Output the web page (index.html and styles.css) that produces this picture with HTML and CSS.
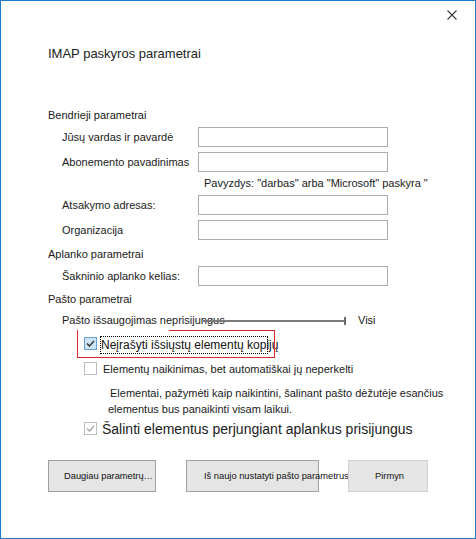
FILE: index.html
```html
<!DOCTYPE html>
<html lang="lt">
<head>
<meta charset="utf-8">
<title>IMAP paskyros parametrai</title>
<link rel="stylesheet" href="styles.css">
</head>
<body>
<div class="dialog">
  <div class="titlebar">
    <svg class="close" width="10" height="10" viewBox="0 0 10 10"><path d="M0.5 0.5L9.5 9.5M9.5 0.5L0.5 9.5" stroke="#3a3a3a" stroke-width="1.1" fill="none"/></svg>
  </div>
  <div class="content">
    <h1 class="title">IMAP paskyros parametrai</h1>

    <div class="heading first">Bendrieji parametrai</div>
    <div class="rows">
      <div class="row"><label class="lbl">Jūsų vardas ir pavardė</label><span class="input"></span></div>
      <div class="row"><label class="lbl">Abonemento pavadinimas</label><span class="input"></span></div>
      <div class="hint">Pavyzdys: "darbas" arba "Microsoft" paskyra "</div>
      <div class="row"><label class="lbl">Atsakymo adresas:</label><span class="input"></span></div>
      <div class="row"><label class="lbl">Organizacija</label><span class="input"></span></div>
    </div>

    <div class="heading next">Aplanko parametrai</div>
    <div class="rows">
      <div class="row"><label class="lbl">Šakninio aplanko kelias:</label><span class="input"></span></div>
    </div>

    <div class="heading next2">Pašto parametrai</div>
    <div class="slider-row">
      <span class="slider-label">Pašto išsaugojimas neprisijungus</span>
      <span class="slider"><span class="track"></span><span class="tick"></span></span>
      <span class="slider-value">Visi</span>
    </div>

    <div class="options">
      <div class="opt opt-focus">
        <span class="cb cb-hot"><svg width="11" height="11" viewBox="0 0 11 11"><path d="M2 5.6L4.4 8L9 3" fill="none" stroke="#2e2e2e" stroke-width="1.4"/></svg></span>
        <span class="focus">Neįrašyti išsiųstų elementų kopijų</span>
      </div>
      <div class="opt opt-small">
        <span class="cb"></span>
        <span class="opt-text">Elementų naikinimas, bet automatiškai jų neperkelti</span>
      </div>
      <p class="desc">Elementai, pažymėti kaip naikintini, šalinant pašto dėžutėje esančius elementus bus panaikinti visam laikui.</p>
      <div class="opt opt-large">
        <span class="cb cb-disabled"><svg width="11" height="11" viewBox="0 0 11 11"><path d="M2 5.6L4.4 8L9 3" fill="none" stroke="#a3a3a3" stroke-width="1.3"/></svg></span>
        <span class="opt-text-large">Šalinti elementus perjungiant aplankus prisijungus</span>
      </div>
    </div>

    <div class="buttons">
      <button class="btn btn-more">Daugiau parametrų…</button>
      <button class="btn btn-reset">Iš naujo nustatyti pašto parametrus</button>
      <button class="btn btn-next">Pirmyn</button>
    </div>
  </div>
  <div class="highlight"></div>
</div>
</body>
</html>
```

FILE: styles.css
```css
* { box-sizing: border-box; }
html, body { margin: 0; padding: 0; background: #fff; }
body { font-family: "Liberation Sans", Arial, sans-serif; color: #1a1a1a; }

.dialog {
  position: relative;
  width: 476px;
  height: 539px;
  border: 1px solid #1979ca;
  background: #fff;
}

.titlebar {
  display: flex;
  justify-content: flex-end;
  align-items: flex-start;
  height: 30px;
  padding: 9px 18px 0 0;
}
.close { display: block; }

.content { padding-left: 47px; }

.title {
  margin: 15px 0 0;
  font-size: 13px;
  line-height: 15px;
  font-weight: normal;
  color: #222;
}

.heading { font-size: 11px; line-height: 13px; }
.heading.first { margin-top: 48px; }
.heading.next { margin-top: 8px; }
.heading.next2 { margin-top: 7px; }

.rows {
  display: flex;
  flex-direction: column;
  gap: 5px;
  margin-top: 5px;
  padding-left: 14px;
}
.row { display: flex; align-items: center; height: 20px; }
.lbl { width: 136px; font-size: 11px; line-height: 13px; white-space: nowrap; }
.input {
  width: 190px;
  height: 20px;
  border: 1px solid #acacac;
  background: #fff;
}
.hint { padding-left: 142px; font-size: 11px; line-height: 13px; white-space: nowrap; }

.slider-row {
  display: flex;
  align-items: center;
  height: 13px;
  margin-top: 8px;
  padding-left: 14px;
}
.slider-label { width: 141px; font-size: 11px; line-height: 13px; white-space: nowrap; }
.slider { position: relative; display: flex; align-items: center; width: 144px; height: 8px; }
.track { display: block; flex: 1; height: 2px; background: #7a7a7a; }
.tick { display: block; width: 2px; height: 8px; background: #6a6a6a; margin-right: 1px; }
.slider-value { margin-left: 11px; font-size: 11px; line-height: 13px; }

.options { padding-left: 36px; }
.opt { display: flex; align-items: flex-start; }
.opt-focus { margin-top: 9px; height: 18px; }
.opt-small { margin-top: 8px; }
.opt-large { margin-top: 4px; }

.cb {
  display: flex;
  align-items: center;
  justify-content: center;
  width: 13px;
  height: 13px;
  border: 1px solid #bdbdbd;
  background: #fff;
  flex: none;
}
.cb svg { display: block; }
.opt-focus .cb { margin-top: 1px; }
.cb-hot { border-color: #6d9fd3; background: #cce4f7; }
.opt-large .cb { margin-top: 1px; }

.focus {
  margin-left: 3px;
  width: 168px;
  height: 18px;
  border: 1px dotted #000;
  font-size: 12px;
  line-height: 16px;
  white-space: nowrap;
  color: #111;
}

.opt-text { margin-left: 6px; margin-top: 1px; font-size: 11px; line-height: 13px; white-space: nowrap; }
.desc {
  margin: 9px 0 0;
  padding-left: 24px;
  width: 372px;
  text-indent: 2px;
  font-size: 11px;
  line-height: 16px;
}
.opt-text-large { margin-left: 5px; font-size: 14px; line-height: 16px; white-space: nowrap; color: #1a1a1a; }

.buttons { display: flex; margin-top: 23px; }
.btn {
  height: 32px;
  border: 1px solid #a0a0a0;
  background: #e5e5e5;
  font-family: "Liberation Sans", Arial, sans-serif;
  font-size: 9.3px;
  color: #111;
  white-space: nowrap;
  overflow: visible;
  padding: 0;
  text-align: left;
}
.btn-more { width: 108px; padding-left: 15px; margin-right: 30px; }
.btn-reset { width: 133px; padding-left: 17px; margin-right: 29px; }
.btn-next { width: 80px; text-align: center; border-color: #cfcfcf; padding-left: 3px; }

.highlight {
  position: absolute;
  left: 76px;
  top: 329px;
  width: 198px;
  height: 28px;
  border: 1px solid #e0262b;
  border-top: none;
}
.highlight::before {
  content: "";
  position: absolute;
  top: 0;
  left: 91px;
  right: -1px;
  height: 1px;
  background: #e0262b;
}
```
